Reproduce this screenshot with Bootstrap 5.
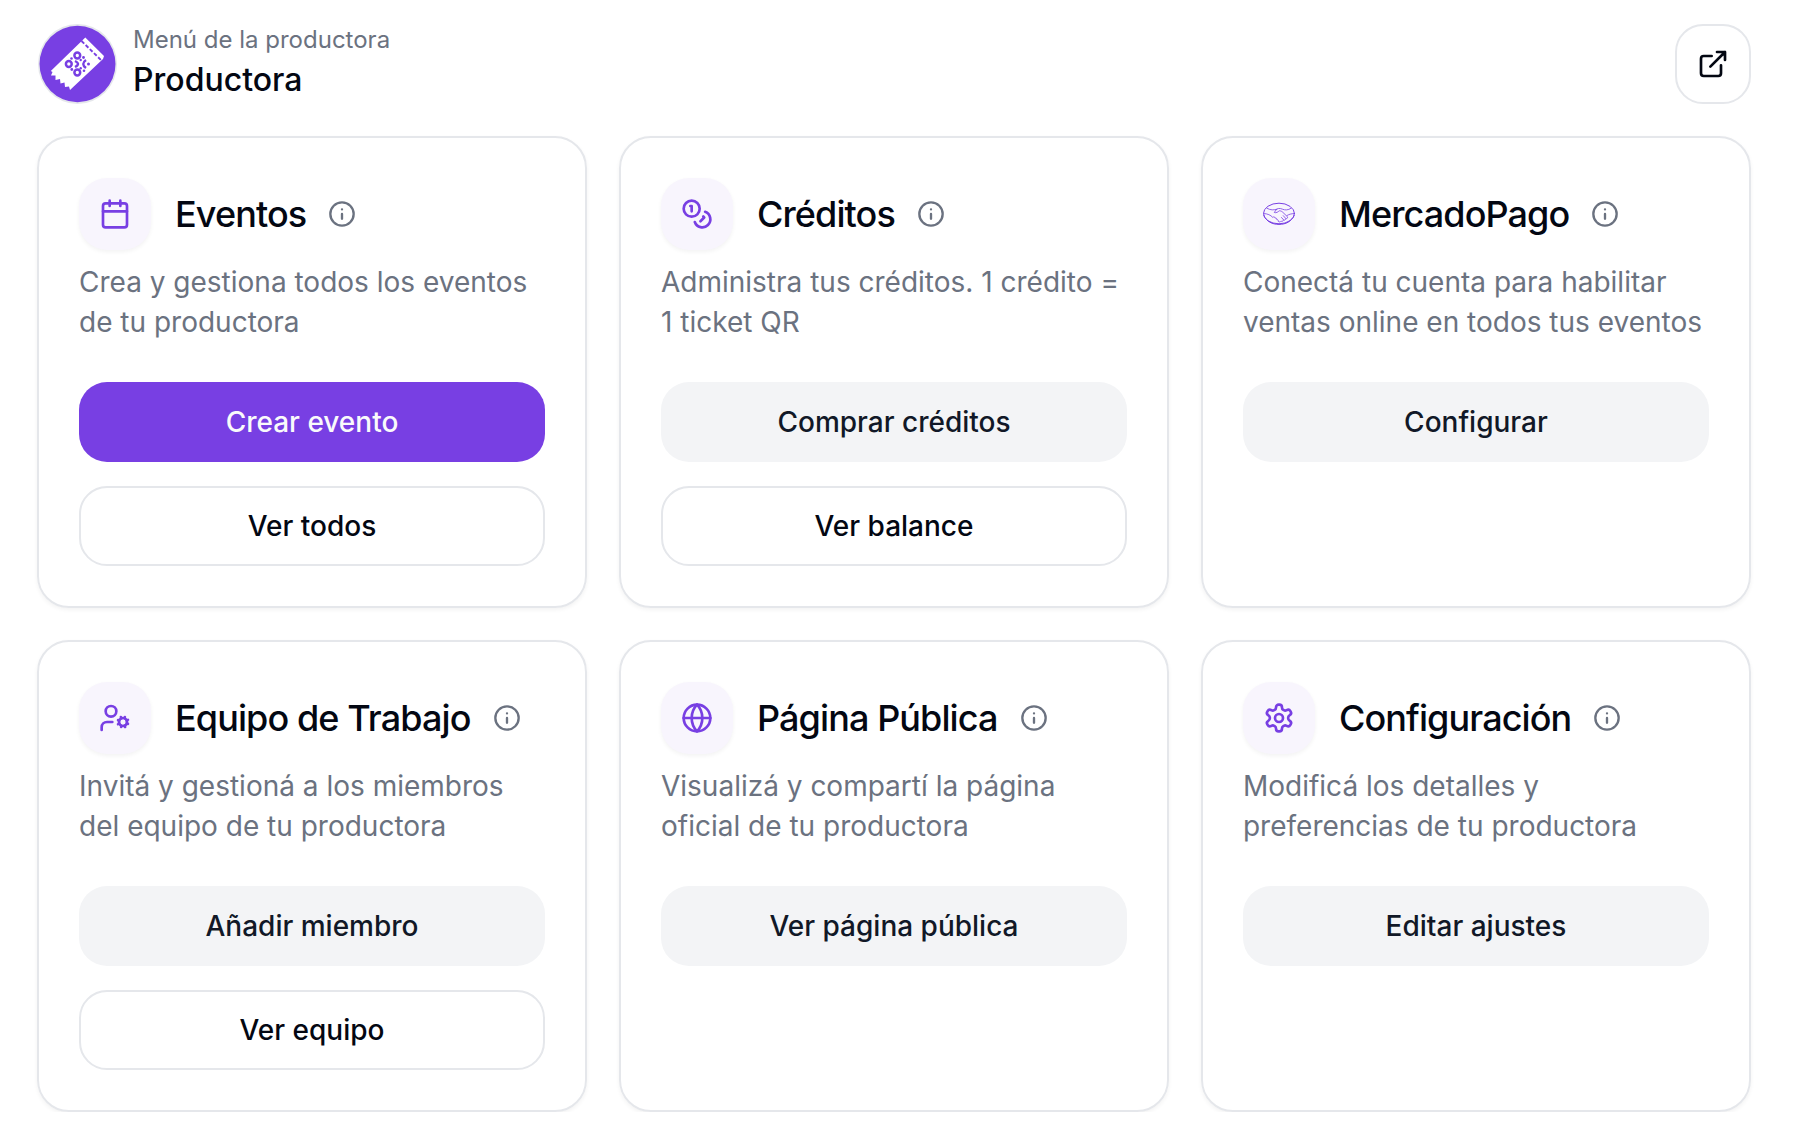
<!DOCTYPE html>
<html lang="es">
<head>
<meta charset="utf-8">
<meta name="viewport" content="width=device-width, initial-scale=1">
<title>Productora</title>
<link href="https://cdn.jsdelivr.net/npm/bootstrap@5.3.0/dist/css/bootstrap.min.css" rel="stylesheet">
<style>
:root{--brand:#783fe3;--line:#e5e7eb;--ink:#030712;--soft:#6b7280}
body{font-family:Inter,"Liberation Sans",sans-serif;color:var(--ink);background:#fff}
.page{padding:24px 44px 0 37px}
.avatar{width:79px;height:80px;margin-left:1px}
.eyebrow{font-size:24px;line-height:32px;color:var(--soft)}
.org-name{font-size:32px;line-height:48px;font-weight:500}
.btn-open{width:76px;height:80px;border:2px solid var(--line);border-radius:28px;color:var(--ink)}
.top-bar{margin-bottom:32px}
.tiles{--bs-gutter-x:32px;--bs-gutter-y:32px}
.tile{height:472px;border:2px solid var(--line);border-radius:32px;padding:40px;box-shadow:0 2px 4px rgba(0,0,0,.05)}
.tile-icon{width:72px;height:72px;border-radius:28px;background:#f8f5fd;color:var(--brand);box-shadow:0 2px 4px rgba(0,0,0,.05)}
.tile-title{font-size:36px;line-height:40px;font-weight:500;letter-spacing:-.9px}
.tile-text{font-size:28px;line-height:40px;color:var(--soft);margin:12px -10px 40px 0}
.btn-tile{height:80px;border-radius:28px;font-size:28px;font-weight:500;border:2px solid transparent;color:var(--ink)}
.btn-main,.btn-main:hover{background:var(--brand);color:#f9fafb}
.btn-soft{background:#f3f4f6;color:#111827}
.btn-line{border-color:var(--line);background:#fff}
.ln{fill:none;stroke:currentColor;stroke-width:2;stroke-linecap:round;stroke-linejoin:round}
.info{color:var(--soft);margin-left:22px}
</style>
</head>
<body>
<svg class="d-none">
  <symbol id="i-info" viewBox="0 0 24 24"><circle cx="12" cy="12" r="10"/><path d="M12 16v-4M12 8h.01"/></symbol>
</svg>
<main class="page">
  <header class="top-bar d-flex align-items-center justify-content-between">
    <div class="d-flex align-items-center">
      <svg class="avatar flex-shrink-0" viewBox="0 0 79 80">
        <ellipse cx="39.5" cy="40" rx="39.5" ry="40" fill="#e5e7eb"/>
        <ellipse cx="39.5" cy="40" rx="38" ry="38.2" fill="#783fe3"/>
        <path fill="#fff" d="M47.300 13.500L66 32 65 35 32 66 31 62.500 27 63 26.500 58.500 22.500 59.500 22 55 17.500 56 17.500 51.500 13 51.500 14.500 48 12.800 47Z"/>
        <path d="M43.500 17L63.500 36.500" stroke="#783fe3" stroke-width="1.900" stroke-dasharray="3.800 2" fill="none"/>
        <g fill="none" stroke="#783fe3" stroke-width="2.500">
          <circle cx="39.300" cy="31.500" r="2.900"/><circle cx="30.800" cy="40" r="2.900"/><circle cx="39.300" cy="48.500" r="2.900"/>
          <path d="M37 37Q43 40 37 43M48 36Q42.500 40 48 44" stroke-width="2.400"/>
        </g>
        <g fill="#783fe3"><circle cx="33.500" cy="34.500" r="1.300"/><circle cx="42.700" cy="36" r="1.200"/><circle cx="45.500" cy="33.500" r="1.400"/><circle cx="33.800" cy="45.500" r="1.400"/><circle cx="42.700" cy="44.300" r="1.200"/><circle cx="46" cy="46.800" r="1.300"/><circle cx="50.500" cy="40" r="1.500"/></g>
      </svg>
      <div class="ms-3">
        <div class="eyebrow">Menú de la productora</div>
        <div class="org-name">Productora</div>
      </div>
    </div>
    <button class="btn btn-open p-0 d-flex align-items-center justify-content-center" aria-label="Abrir">
      <svg class="ln" width="32" height="32" viewBox="0 0 24 24"><path d="M15 3h6v6M10 14 21 3M18 13v6a2 2 0 0 1-2 2H5a2 2 0 0 1-2-2V8a2 2 0 0 1 2-2h6"/></svg>
    </button>
  </header>

  <div class="row tiles">
    <div class="col-4"><section class="tile">
      <div class="d-flex align-items-center">
        <div class="tile-icon d-flex align-items-center justify-content-center flex-shrink-0"><svg class="ln" width="32" height="32" viewBox="0 0 24 24"><path d="M8 2v4M16 2v4M3 10h18"/><rect width="18" height="18" x="3" y="4" rx="2"/></svg></div>
        <h2 class="tile-title mb-0 ms-4">Eventos</h2>
        <svg class="ln info" width="28" height="28"><use href="#i-info"/></svg>
      </div>
      <p class="tile-text">Crea y gestiona todos los eventos<br>de tu productora</p>
      <div class="d-grid gap-4"><button class="btn btn-tile btn-main">Crear evento</button><button class="btn btn-tile btn-line">Ver todos</button></div>
    </section></div>

    <div class="col-4"><section class="tile">
      <div class="d-flex align-items-center">
        <div class="tile-icon d-flex align-items-center justify-content-center flex-shrink-0"><svg class="ln" width="32" height="32" viewBox="0 0 24 24"><circle cx="8" cy="8" r="6"/><path d="M18.090 10.370A6 6 0 1 1 10.340 18M7 6h1v4M16.710 13.880l.7.710-2.820 2.820"/></svg></div>
        <h2 class="tile-title mb-0 ms-4">Créditos</h2>
        <svg class="ln info" width="28" height="28"><use href="#i-info"/></svg>
      </div>
      <p class="tile-text">Administra tus créditos. 1 crédito =<br>1 ticket QR</p>
      <div class="d-grid gap-4"><button class="btn btn-tile btn-soft">Comprar créditos</button><button class="btn btn-tile btn-line">Ver balance</button></div>
    </section></div>

    <div class="col-4"><section class="tile">
      <div class="d-flex align-items-center">
        <div class="tile-icon d-flex align-items-center justify-content-center flex-shrink-0"><svg class="ln" width="32" height="32" viewBox="0 0 32 32"><ellipse cx="16" cy="15.500" rx="15.500" ry="10.300" stroke-width="1"/><path stroke-width="1" d="M.8 17.500c3 6.300 8.500 8.900 15.200 8.900s12.200-2.600 15.200-8.900"/><path stroke-width=".8" d="M4 10.300c3.500 2 7 2 10 .8M28 10.300c-3 2-6 2-8.500.9-3-1.300-5-.9-6.500.8L11.300 14.500c2 .8 3.700-.7 5-1.700 1.700 0 2.700.7 3.700 1.700l4.500 4.300c.3 1.300-.5 2-1.900 1.900 0 1.200-.9 1.700-2.200 1.500-.3 1-1.200 1.400-2.500 1-.6.900-1.700 1-2.600.2.200-1.200-.4-1.800-1.500-1.800.1-1.200-.6-1.700-1.800-1.500-.1-1.200-1.300-1.700-2.200-.7-2.300-2.400-5-3.600-9-3.900M24 17.500c2-1.200 4.300-1.800 7-2M18.500 19.500l2 2.200M20.300 17.700l2.300 2.600"/></svg></div>
        <h2 class="tile-title mb-0 ms-4">MercadoPago</h2>
        <svg class="ln info" width="28" height="28"><use href="#i-info"/></svg>
      </div>
      <p class="tile-text">Conectá tu cuenta para habilitar<br>ventas online en todos tus eventos</p>
      <div class="d-grid gap-4"><button class="btn btn-tile btn-soft">Configurar</button></div>
    </section></div>

    <div class="col-4"><section class="tile">
      <div class="d-flex align-items-center">
        <div class="tile-icon d-flex align-items-center justify-content-center flex-shrink-0"><svg class="ln" width="32" height="32" viewBox="0 0 24 24"><circle cx="18" cy="15" r="3"/><circle cx="9" cy="7" r="4"/><path d="M10 15H6a4 4 0 0 0-4 4v2M21.700 16.400l-.9-.3M15.200 13.900l-.9-.3M16.600 18.700l.3-.9M19.100 12.200l.3-.9M19.600 18.700l-.4-1M16.800 12.300l-.4-1M14.300 16.600l1-.4M20.700 13.800l1-.4"/></svg></div>
        <h2 class="tile-title mb-0 ms-4">Equipo de Trabajo</h2>
        <svg class="ln info" width="28" height="28"><use href="#i-info"/></svg>
      </div>
      <p class="tile-text">Invitá y gestioná a los miembros<br>del equipo de tu productora</p>
      <div class="d-grid gap-4"><button class="btn btn-tile btn-soft">Añadir miembro</button><button class="btn btn-tile btn-line">Ver equipo</button></div>
    </section></div>

    <div class="col-4"><section class="tile">
      <div class="d-flex align-items-center">
        <div class="tile-icon d-flex align-items-center justify-content-center flex-shrink-0"><svg class="ln" width="32" height="32" viewBox="0 0 24 24"><circle cx="12" cy="12" r="10"/><path d="M12 2a14.500 14.500 0 0 0 0 20 14.500 14.500 0 0 0 0-20M2 12h20"/></svg></div>
        <h2 class="tile-title mb-0 ms-4">Página Pública</h2>
        <svg class="ln info" width="28" height="28"><use href="#i-info"/></svg>
      </div>
      <p class="tile-text">Visualizá y compartí la página<br>oficial de tu productora</p>
      <div class="d-grid gap-4"><button class="btn btn-tile btn-soft">Ver página pública</button></div>
    </section></div>

    <div class="col-4"><section class="tile">
      <div class="d-flex align-items-center">
        <div class="tile-icon d-flex align-items-center justify-content-center flex-shrink-0"><svg class="ln" width="32" height="32" viewBox="0 0 24 24"><path d="M12.220 2h-.44a2 2 0 0 0-2 2v.18a2 2 0 0 1-1 1.730l-.43.250a2 2 0 0 1-2 0l-.15-.08a2 2 0 0 0-2.730.730l-.22.380a2 2 0 0 0 .730 2.730l.150.100a2 2 0 0 1 1 1.720v.510a2 2 0 0 1-1 1.740l-.15.090a2 2 0 0 0-.73 2.730l.220.380a2 2 0 0 0 2.730.730l.150-.08a2 2 0 0 1 2 0l.430.250a2 2 0 0 1 1 1.730V20a2 2 0 0 0 2 2h.440a2 2 0 0 0 2-2v-.18a2 2 0 0 1 1-1.730l.430-.25a2 2 0 0 1 2 0l.150.080a2 2 0 0 0 2.730-.73l.220-.39a2 2 0 0 0-.73-2.730l-.15-.08a2 2 0 0 1-1-1.740v-.5a2 2 0 0 1 1-1.740l.150-.09a2 2 0 0 0 .730-2.730l-.22-.38a2 2 0 0 0-2.730-.73l-.15.080a2 2 0 0 1-2 0l-.43-.25a2 2 0 0 1-1-1.730V4a2 2 0 0 0-2-2z"/><circle cx="12" cy="12" r="3"/></svg></div>
        <h2 class="tile-title mb-0 ms-4">Configuración</h2>
        <svg class="ln info" width="28" height="28"><use href="#i-info"/></svg>
      </div>
      <p class="tile-text">Modificá los detalles y<br>preferencias de tu productora</p>
      <div class="d-grid gap-4"><button class="btn btn-tile btn-soft">Editar ajustes</button></div>
    </section></div>
  </div>
</main>
<script src="https://cdn.jsdelivr.net/npm/bootstrap@5.3.0/dist/js/bootstrap.bundle.min.js"></script>
</body>
</html>
